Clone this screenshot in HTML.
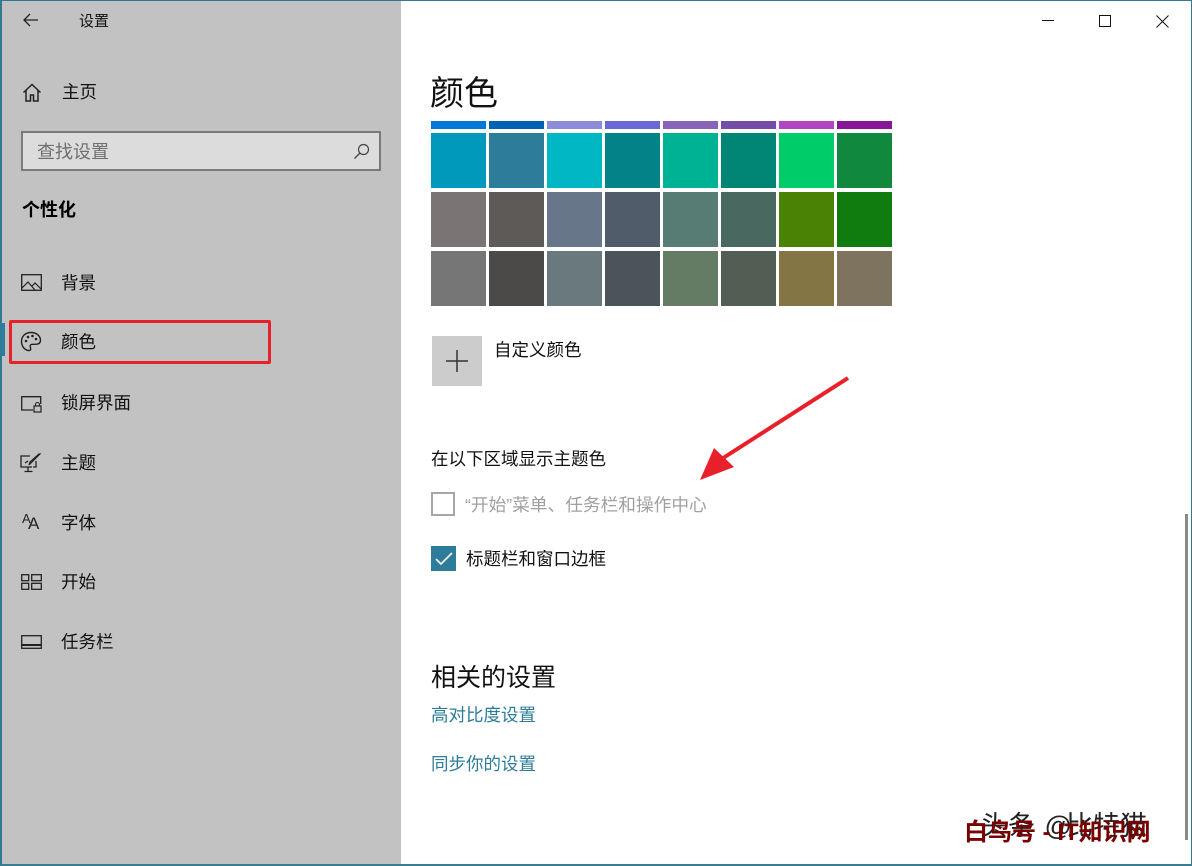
<!DOCTYPE html>
<html><head><meta charset="utf-8"><style>
*{margin:0;padding:0;box-sizing:border-box}
body{width:1192px;height:866px;overflow:hidden;background:#fff;font-family:"Liberation Sans","Noto Sans CJK SC",sans-serif;position:relative;color:#000}
.a{position:absolute;white-space:nowrap}
#left{position:absolute;left:0;top:0;width:401px;height:866px;background:#c2c2c2}
.nav{font-size:17.5px;color:#111}
.sw{position:absolute;width:55px}
svg{position:absolute}
</style></head><body>
<div id="left"></div>
<div class="a" style="left:0;top:0;width:1192px;height:866px;border:1px solid #2f7a92;border-left:2px solid #2f7a92;border-bottom:2px solid #3a7d90"></div>
<svg style="left:22px;top:12px" width="18" height="16" viewBox="0 0 18 16"><path d="M16 8H2M8 2L2 8l6 6" stroke="#222" stroke-width="1.3" fill="none"/></svg>
<div class="a" style="left:79px;top:10px;font-size:15px;color:#111">设置</div>
<svg style="left:22px;top:83px" width="20" height="19" viewBox="0 0 20 19"><path d="M1.5 9.5L10 1.5l8.5 8M4 7.5V18h4.5v-6h3v6H16V7.5" stroke="#222" stroke-width="1.5" fill="none"/></svg>
<div class="a nav" style="left:62px;top:79px">主页</div>
<div class="a" style="left:21px;top:131px;width:360px;height:40px;border:2px solid #7a7a7a;background:#dcdcdc"></div>
<div class="a" style="left:37px;top:138px;font-size:18px;color:#6f6f6f">查找设置</div>
<svg style="left:353px;top:143px" width="17" height="17" viewBox="0 0 17 17"><circle cx="10.5" cy="6.5" r="5" stroke="#444" stroke-width="1.2" fill="none"/><path d="M7 10L1.5 15.5" stroke="#444" stroke-width="1.3"/></svg>
<div class="a" style="left:22px;top:196px;font-size:18px;font-weight:bold">个性化</div>
<svg style="left:21px;top:274px" width="21" height="17" viewBox="0 0 21 17"><rect x="0.7" y="0.7" width="19.6" height="15.6" stroke="#222" stroke-width="1.3" fill="none"/><path d="M1 14l6-6 7 8M11 12l3-3 6 6" stroke="#222" stroke-width="1.2" fill="none"/></svg>
<div class="a nav" style="left:61px;top:270px">背景</div>
<div class="a" style="left:0;top:323px;width:5px;height:33px;background:#2d7d9a"></div>
<div class="a" style="left:9px;top:320px;width:262px;height:44px;border:3px solid #e8202a;border-radius:2px"></div>
<svg style="left:20px;top:331px" width="22" height="21" viewBox="0 0 22 21"><path d="M11 1.5C5 1.5 1.5 5.5 1.5 10.5S5 19.5 9 19.5c2 0 2-2 1.3-3.4-.7-1.4.3-2.8 2-2.8h3.5c3 0 4.7-1.5 4.7-4C20.5 5 16.5 1.5 11 1.5z" stroke="#222" stroke-width="1.4" fill="none"/><circle cx="6" cy="10" r="1.3" fill="#222"/><circle cx="8" cy="6" r="1.3" fill="#222"/><circle cx="12.5" cy="5" r="1.3" fill="#222"/><circle cx="16" cy="8" r="1.3" fill="#222"/></svg>
<div class="a nav" style="left:61px;top:329px">颜色</div>
<svg style="left:21px;top:396px" width="21" height="17" viewBox="0 0 21 17"><path d="M12 14H0.7V0.7h19V8" stroke="#222" stroke-width="1.3" fill="none"/><rect x="13" y="10" width="7" height="6" stroke="#222" stroke-width="1.2" fill="none"/><path d="M14.5 10V8.5a2 2 0 0 1 4 0V10" stroke="#222" stroke-width="1.1" fill="none"/></svg>
<div class="a nav" style="left:61px;top:390px">锁屏界面</div>
<svg style="left:20px;top:453px" width="22" height="20" viewBox="0 0 22 20"><path d="M12 14H1V3h9M16 8v6h-3M8 14v4M4.5 18.5h8" stroke="#222" stroke-width="1.3" fill="none"/><path d="M20 1L11 10l-2 2 1-3 9-8z" stroke="#222" stroke-width="1.2" fill="none"/><path d="M5 10l3-2" stroke="#222" stroke-width="1.3"/></svg>
<div class="a nav" style="left:61px;top:450px">主题</div>
<div class="a" style="left:22px;top:511px;font-size:13px;color:#222">A</div>
<div class="a" style="left:28px;top:514px;font-size:17px;color:#222">A</div>
<div class="a nav" style="left:61px;top:510px">字体</div>
<svg style="left:21px;top:574px" width="21" height="16" viewBox="0 0 21 16"><rect x="0.7" y="0.7" width="7" height="6" stroke="#222" stroke-width="1.3" fill="none"/><rect x="10.7" y="0.7" width="9.6" height="6" stroke="#222" stroke-width="1.3" fill="none"/><rect x="0.7" y="9.3" width="7" height="6" stroke="#222" stroke-width="1.3" fill="none"/><rect x="10.7" y="9.3" width="9.6" height="6" stroke="#222" stroke-width="1.3" fill="none"/></svg>
<div class="a nav" style="left:61px;top:569px">开始</div>
<svg style="left:21px;top:635px" width="21" height="14" viewBox="0 0 21 14"><rect x="0.7" y="0.7" width="19.6" height="12.6" stroke="#222" stroke-width="1.3" fill="none"/><path d="M1 10h19" stroke="#222" stroke-width="2"/></svg>
<div class="a nav" style="left:61px;top:629px">任务栏</div>

<div class="a" style="left:1042px;top:20px;width:12px;height:1px;background:#111"></div>
<div class="a" style="left:1099px;top:15px;width:12px;height:12px;border:1px solid #111"></div>
<svg style="left:1156px;top:15px" width="13" height="13" viewBox="0 0 13 13"><path d="M0.5 0.5l12 12M12.5 0.5l-12 12" stroke="#111" stroke-width="1"/></svg>

<div class="a" style="left:430px;top:66px;font-size:34px;color:#111">颜色</div>

<div class="sw" style="left:431px;top:121px;height:8px;background:#0078d7"></div>
<div class="sw" style="left:489px;top:121px;height:8px;background:#0063b1"></div>
<div class="sw" style="left:547px;top:121px;height:8px;background:#8e8cd8"></div>
<div class="sw" style="left:605px;top:121px;height:8px;background:#6b69d6"></div>
<div class="sw" style="left:663px;top:121px;height:8px;background:#8764b8"></div>
<div class="sw" style="left:721px;top:121px;height:8px;background:#744da9"></div>
<div class="sw" style="left:779px;top:121px;height:8px;background:#b146c2"></div>
<div class="sw" style="left:837px;top:121px;height:8px;background:#881798"></div>

<div class="sw" style="left:431px;top:133px;height:55px;background:#0099bc"></div>
<div class="sw" style="left:489px;top:133px;height:55px;background:#2d7d9a"></div>
<div class="sw" style="left:547px;top:133px;height:55px;background:#00b7c3"></div>
<div class="sw" style="left:605px;top:133px;height:55px;background:#038387"></div>
<div class="sw" style="left:663px;top:133px;height:55px;background:#00b294"></div>
<div class="sw" style="left:721px;top:133px;height:55px;background:#018574"></div>
<div class="sw" style="left:779px;top:133px;height:55px;background:#00cc6a"></div>
<div class="sw" style="left:837px;top:133px;height:55px;background:#10893e"></div>

<div class="sw" style="left:431px;top:192px;height:55px;background:#7a7574"></div>
<div class="sw" style="left:489px;top:192px;height:55px;background:#5d5a58"></div>
<div class="sw" style="left:547px;top:192px;height:55px;background:#68768a"></div>
<div class="sw" style="left:605px;top:192px;height:55px;background:#515c6b"></div>
<div class="sw" style="left:663px;top:192px;height:55px;background:#567c73"></div>
<div class="sw" style="left:721px;top:192px;height:55px;background:#486860"></div>
<div class="sw" style="left:779px;top:192px;height:55px;background:#498205"></div>
<div class="sw" style="left:837px;top:192px;height:55px;background:#107c10"></div>

<div class="sw" style="left:431px;top:251px;height:55px;background:#767676"></div>
<div class="sw" style="left:489px;top:251px;height:55px;background:#4c4a48"></div>
<div class="sw" style="left:547px;top:251px;height:55px;background:#69797e"></div>
<div class="sw" style="left:605px;top:251px;height:55px;background:#4a5459"></div>
<div class="sw" style="left:663px;top:251px;height:55px;background:#647c64"></div>
<div class="sw" style="left:721px;top:251px;height:55px;background:#525e54"></div>
<div class="sw" style="left:779px;top:251px;height:55px;background:#847545"></div>
<div class="sw" style="left:837px;top:251px;height:55px;background:#7e735f"></div>

<div class="a" style="left:432px;top:336px;width:50px;height:50px;background:#cccccc"></div>
<svg style="left:446px;top:350px" width="22" height="22" viewBox="0 0 22 22"><path d="M11 0v22M0 11h22" stroke="#333" stroke-width="1.5"/></svg>
<div class="a" style="left:494px;top:337px;font-size:17.5px;color:#111">自定义颜色</div>

<svg style="left:690px;top:370px" width="165" height="115" viewBox="0 0 165 115"><path d="M158 8L30 90" stroke="#e8202a" stroke-width="4"/><path d="M10 110L24 78 44 97z" fill="#e8202a"/></svg>

<div class="a" style="left:431px;top:446px;font-size:17.5px;color:#111">在以下区域显示主题色</div>
<div class="a" style="left:431px;top:492px;width:24px;height:24px;border:2px solid #a6a6a6"></div>
<div class="a" style="left:465px;top:491px;font-size:17.7px;color:#a0a0a0">“开始”菜单、任务栏和操作中心</div>
<div class="a" style="left:431px;top:546px;width:25px;height:25px;background:#2d7d9a"></div>
<svg style="left:434px;top:550px" width="20" height="17" viewBox="0 0 20 17"><path d="M2 9l5 5L18 3" stroke="#fff" stroke-width="1.6" fill="none"/></svg>
<div class="a" style="left:466px;top:546px;font-size:17.5px;color:#111">标题栏和窗口边框</div>

<div class="a" style="left:431px;top:658px;font-size:25px;color:#111">相关的设置</div>
<div class="a" style="left:431px;top:702px;font-size:17.5px;color:#2d7d9a">高对比度设置</div>
<div class="a" style="left:431px;top:751px;font-size:17.5px;color:#2d7d9a">同步你的设置</div>

<div class="a" style="left:1185px;top:514px;width:3px;height:326px;background:#8a8a8a"></div>

<div class="a" style="left:980px;top:804px;font-size:27px;color:#222;letter-spacing:1px">头条 @</div>
<div class="a" style="left:1066px;top:804px;font-size:27px;color:#222">比特猫</div>
<div class="a" style="left:964px;top:812px;font-size:24px;color:#7a0000;font-weight:bold">白鸟号 - IT知识网</div>
</body></html>
